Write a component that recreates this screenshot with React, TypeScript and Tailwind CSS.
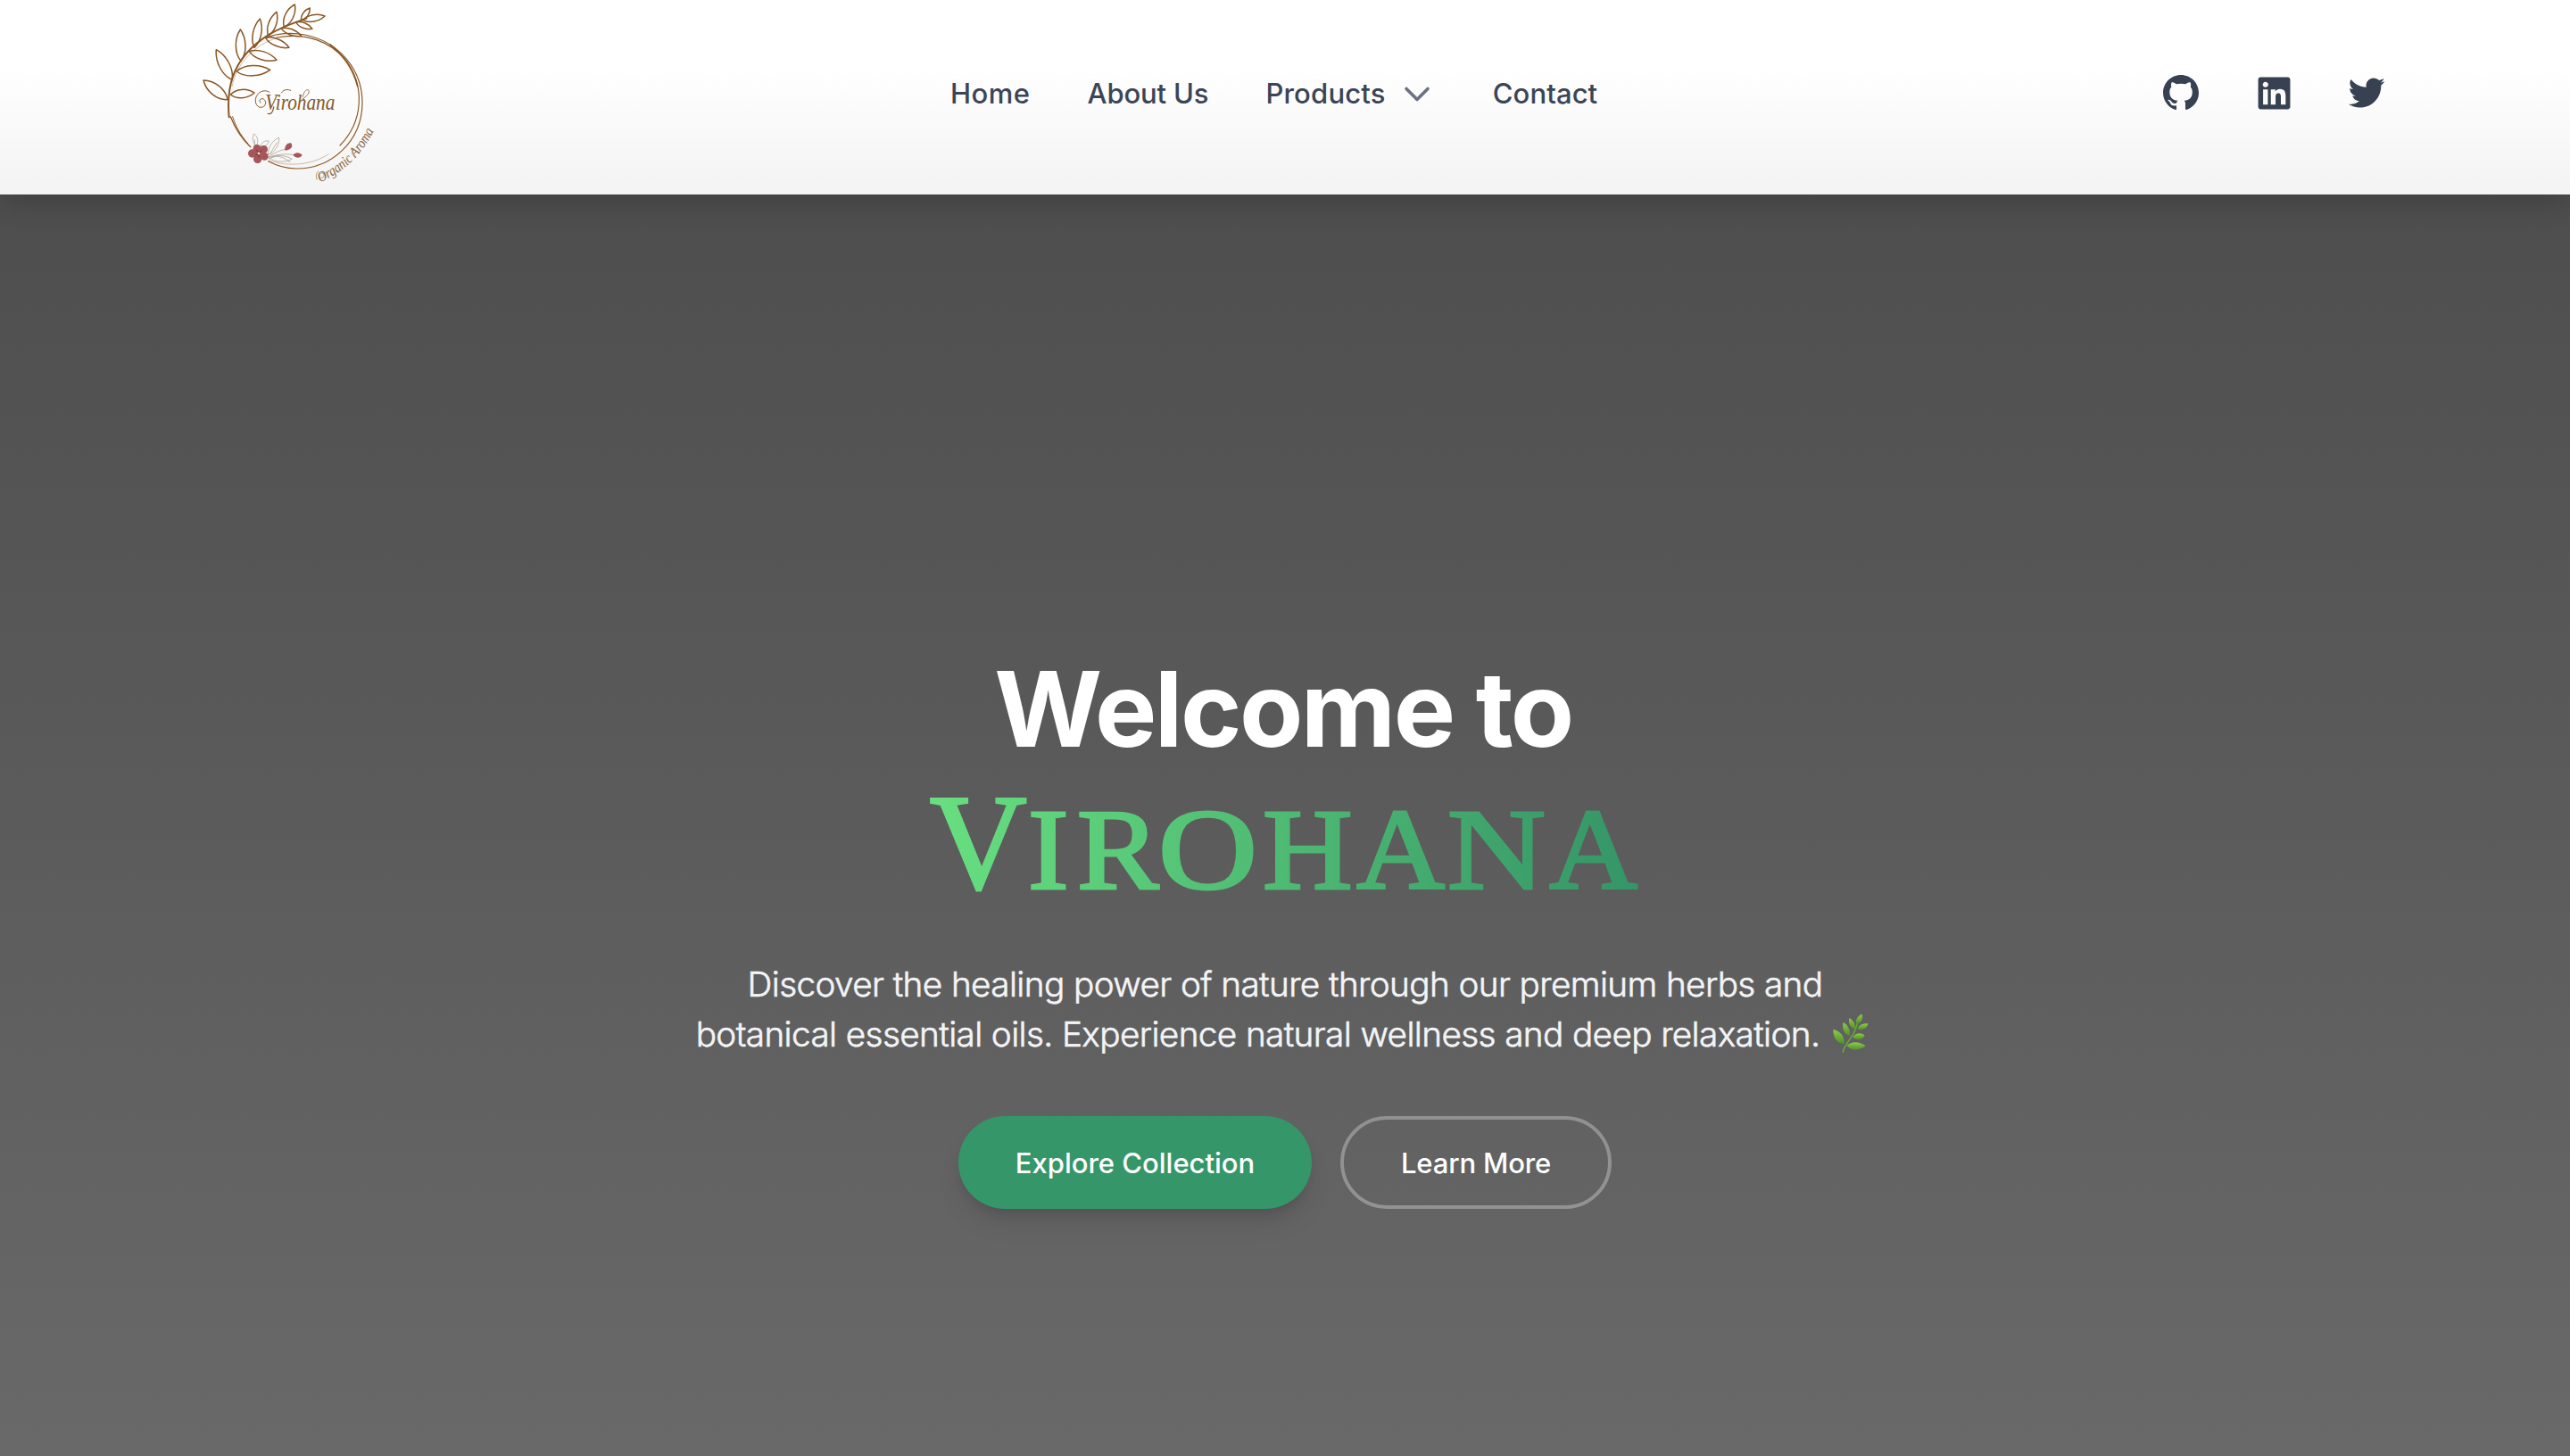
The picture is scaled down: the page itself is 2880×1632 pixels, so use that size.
import { RiGithubFill, RiTwitterFill } from "react-icons/ri";
import { FaLinkedin } from "react-icons/fa";

const BROWN = "#8a5725";

function leaf(bx: number, by: number, tx: number, ty: number, w: number) {
  const dx = tx - bx;
  const dy = ty - by;
  const len = Math.hypot(dx, dy);
  const nx = (-dy / len) * w * 1.33;
  const ny = (dx / len) * w * 1.33;
  const p = (t: number, s: number) => `${(bx + dx * t + nx * s).toFixed(1)} ${(by + dy * t + ny * s).toFixed(1)}`;
  return `M${bx} ${by}C${p(0.25, 1)} ${p(0.7, 1)} ${tx} ${ty}C${p(0.7, -1)} ${p(0.25, -1)} ${bx} ${by}Z`;
}

const LEAVES: [number, number, number, number, number][] = [
  [135, 335, 54, 270, 18],
  [150, 268, 97, 167, 17],
  [180, 205, 178, 99, 16],
  [225, 160, 244, 63, 14],
  [272, 120, 300, 40, 13],
  [325, 90, 361, 15, 14],
  [383, 68, 412, 27, 9],
  [388, 68, 462, 54, 11],
  [145, 318, 225, 312, 14],
  [165, 240, 278, 235, 17],
  [208, 173, 300, 202, 14],
  [263, 127, 342, 160, 12],
  [315, 95, 383, 121, 10],
  [365, 75, 420, 97, 9],
];

const SPRIGS: [number, number, number, number, number][] = [
  [232, 490, 224, 450, 8],
  [246, 492, 274, 474, 7],
  [272, 520, 308, 463, 11],
  [276, 532, 352, 535, 10],
];

function Logo() {
  return (
    <svg viewBox="0 0 690 660" className="h-[220px] w-[230px] shrink-0 self-start" fill="none" strokeLinecap="round" strokeLinejoin="round">
      <g stroke={BROWN}>
        <path d="M265 127C300 112 350 108 395 117C510 140 590 235 588 350C585 475 485 568 365 567C330 566 300 557 272 542" strokeWidth="3.5" />
        <path d="M300 126C400 108 480 140 530 200C600 290 590 410 513 489" strokeWidth="3.5" />
        <path d="M480 150C530 190 560 240 572 290" strokeWidth="5" />
        <path d="M145 392C160 430 185 468 212 494" strokeWidth="4" />
        <path d="M152 392C160 420 178 455 203 482" strokeWidth="3" />
        <path d="M275 540C340 562 420 555 475 518" strokeWidth="1.6" opacity="0.7" />
        <path d="M150 290C165 215 225 150 300 128" strokeWidth="1.8" opacity="0.7" />
        <path d="M140 394C136 350 137 305 152 260C172 200 220 150 275 116C318 90 350 80 400 62" strokeWidth="6" />
        {LEAVES.map((l, i) => (
          <path key={i} d={leaf(...l)} strokeWidth="4.5" />
        ))}
      </g>
      <g stroke="#a09284" strokeWidth="2">
        {SPRIGS.map((l, i) => (
          <path key={i} d={leaf(...l)} />
        ))}
        <path d="M270 530C290 515 310 505 330 502M270 530C300 518 330 516 358 521M275 534C300 520 320 525 345 545M226 490L226 470M278 518L300 480" />
      </g>
      <g fill="#a4565a">
        <circle cx="234" cy="499" r="13" />
        <circle cx="257" cy="502" r="13" />
        <circle cx="259" cy="526" r="13" />
        <circle cx="236" cy="535" r="14" />
        <circle cx="218" cy="516" r="14" />
        <circle cx="240" cy="516" r="15" />
        <path d="M328 506C326 490 336 480 348 481C356 490 352 504 328 506Z" />
        <path d="M355 521C362 511 378 511 386 521C380 533 364 533 355 521Z" />
      </g>
      <path d="M240 516L232 504M240 516L250 506M240 516L230 522M240 516L240 528" stroke="#6f3335" strokeWidth="2.5" />
      <circle cx="240" cy="516" r="4" fill="#f3e3d8" />
      <g stroke="#85592b">
        <path d="M246 346C238 340 246 328 256 333C268 340 264 360 248 361C230 361 224 338 233 322C242 306 262 300 276 310" strokeWidth="3" />
        <path d="M290 360C288 378 280 386 271 382" strokeWidth="4" />
        <path d="M316 312C326 298 338 301 347 304" strokeWidth="3" />
        <path d="M388 325C392 305 402 298 408 304C412 314 398 326 388 332" strokeWidth="2.5" />
      </g>
      <text x="262" y="368" textLength="234" lengthAdjust="spacingAndGlyphs" fill="#85592b" fontFamily="Liberation Serif, serif" fontStyle="italic" fontSize="78">
        Virohana
      </text>
      <path id="tagline" d="M446 613Q578 556 638 416" />
      <path d="M446 598C438 590 446 578 456 582C464 590 458 600 450 598M436 604C430 592 434 580 440 576M566 528C552 526 550 508 560 500" stroke="#85633c" strokeWidth="2" />
      <text fill="#85633c" fontFamily="Liberation Serif, serif" fontStyle="italic" fontSize="49">
        <textPath href="#tagline" textLength="256" lengthAdjust="spacingAndGlyphs">
          Organic Aroma
        </textPath>
      </text>
    </svg>
  );
}

const WORDMARK: { ch: string; w: number; s: number }[] = [
  { ch: "V", w: 109.7, s: 0.99 },
  { ch: "I", w: 54.6, s: 1.06 },
  { ch: "R", w: 91.1, s: 1.08 },
  { ch: "O", w: 117.3, s: 1.19 },
  { ch: "H", w: 105.3, s: 1.08 },
  { ch: "A", w: 101.7, s: 1.07 },
  { ch: "N", w: 113.5, s: 1.18 },
  { ch: "A", w: 101, s: 1.07 },
];

function shade(x: number) {
  const t = Math.max(0, Math.min(1, x / 794));
  const mix = (a: number, b: number) => Math.round(a + (b - a) * t);
  return `rgb(${mix(104, 52)},${mix(223, 149)},${mix(128, 103)})`;
}

function Wordmark() {
  let x = 0;
  return (
    <div className="mt-[14px] flex h-[153px] items-baseline justify-center pr-px font-['Liberation_Serif',serif] leading-none">
      {WORDMARK.map(({ ch, w, s }, i) => {
        const start = x;
        x += w;
        return (
          <span key={i} className="shrink-0" style={{ width: w }}>
            <span
              className={`inline-block origin-left bg-clip-text text-transparent [-webkit-text-stroke:3.2px_transparent] ${i === 0 ? "text-[152px]" : "text-[129px]"}`}
              style={{ transform: `scaleX(${s})`, backgroundImage: `linear-gradient(to right, ${shade(start)}, ${shade(start + w)})` }}
            >
              {ch}
            </span>
          </span>
        );
      })}
    </div>
  );
}

function Herb() {
  return (
    <svg viewBox="0 0 240 210" className="relative -top-1 -ml-[9px] h-[70px] w-[80px] shrink-0">
      <defs>
        <linearGradient id="herb" x1="0" y1="0" x2="0" y2="1">
          <stop offset="0" stopColor="#8ecb4a" />
          <stop offset="1" stopColor="#4f8f2b" />
        </linearGradient>
      </defs>
      <path d="M106 178C108 158 128 138 140 118C148 104 150 92 154 80" fill="none" stroke="#6aa338" strokeWidth="5" strokeLinecap="round" />
      <g fill="url(#herb)">
        <path d="M110 151C86 148 72 130 73 101C98 108 112 124 110 151Z" />
        <path d="M128 124C108 116 102 98 107 77C124 88 131 104 128 124Z" />
        <path d="M145 101C129 94 123 80 127 63C142 72 149 84 145 101Z" />
        <path d="M152 84C146 70 154 56 170 50C174 66 168 78 152 84Z" />
        <path d="M154 102C158 86 172 80 191 82C186 98 172 106 154 102Z" />
        <path d="M139 128C148 113 166 111 179 122C170 138 152 140 139 128Z" />
        <path d="M119 156C136 140 160 142 182 157C160 174 136 176 119 156Z" />
      </g>
    </svg>
  );
}

export default function App() {
  return (
    <div className="flex h-[1632px] w-full flex-col overflow-hidden bg-[#5a5a5a] font-[Inter,sans-serif]">
      <header className="relative z-10 flex h-[218px] shrink-0 bg-linear-to-b from-white from-35% to-[#f4f4f4] to-95% pl-[210px] pr-[204px] shadow-[0_8px_30px_rgba(0,0,0,0.2)]">
        <Logo />
        <nav className="ml-[625px] flex h-[211px] items-center gap-16 whitespace-nowrap text-[31px] font-medium text-[#3b4556]">
          <a className="tracking-[0.5px]">Home</a>
          <a className="tracking-[-0.14px]">About Us</a>
          <a className="flex items-center pr-[5px] tracking-[0.2px]">
            Products
            <svg viewBox="0 0 32 32" className="ml-[19px] size-8" fill="none" stroke="#6b7280" strokeWidth="3.6" strokeLinecap="round" strokeLinejoin="round">
              <path d="M4 9.5L16 21.5L28 9.5" />
            </svg>
          </a>
          <a className="tracking-[0.1px]">Contact</a>
        </nav>
        <div className="ml-auto flex h-[208px] items-center gap-14 text-[#374151]">
          <RiGithubFill className="size-12" />
          <span className="flex size-12 items-center justify-center">
            <FaLinkedin className="size-[41px]" />
          </span>
          <RiTwitterFill className="size-12" />
        </div>
      </header>
      <main className="flex flex-1 flex-col items-center bg-linear-to-b from-[#4e4e4e] to-[#696969] pt-[517px] text-white">
        <h1>
          <div className="pr-[4px] text-center text-[116.5px] font-bold leading-[120px] tracking-[-2.5px]">Welcome to</div>
          <Wordmark />
        </h1>
        <div className="mt-[53px] flex flex-col items-center whitespace-nowrap text-[38.7px] font-light leading-[56px] text-[#f3f4f6] [-webkit-text-stroke:0.6px_#f3f4f6]">
          <p className="tracking-[-0.6px]">Discover the healing power of nature through our premium herbs and</p>
          <p className="flex h-14 items-center pl-[10px] tracking-[-0.615px]">
            botanical essential oils. Experience natural wellness and deep relaxation.
            <Herb />
          </p>
        </div>
        <div className="mt-16 flex gap-8 text-[31px] font-medium">
          <button className="h-[104px] w-[396px] rounded-full bg-[#359669] pt-0.5 shadow-[0_20px_30px_-6px_rgba(0,0,0,0.1),0_8px_12px_-4px_rgba(0,0,0,0.1)]">Explore Collection</button>
          <button className="h-[104px] w-[304px] rounded-full border-4 border-white/30 pt-0.5 tracking-[-0.15px]">Learn More</button>
        </div>
      </main>
    </div>
  );
}
